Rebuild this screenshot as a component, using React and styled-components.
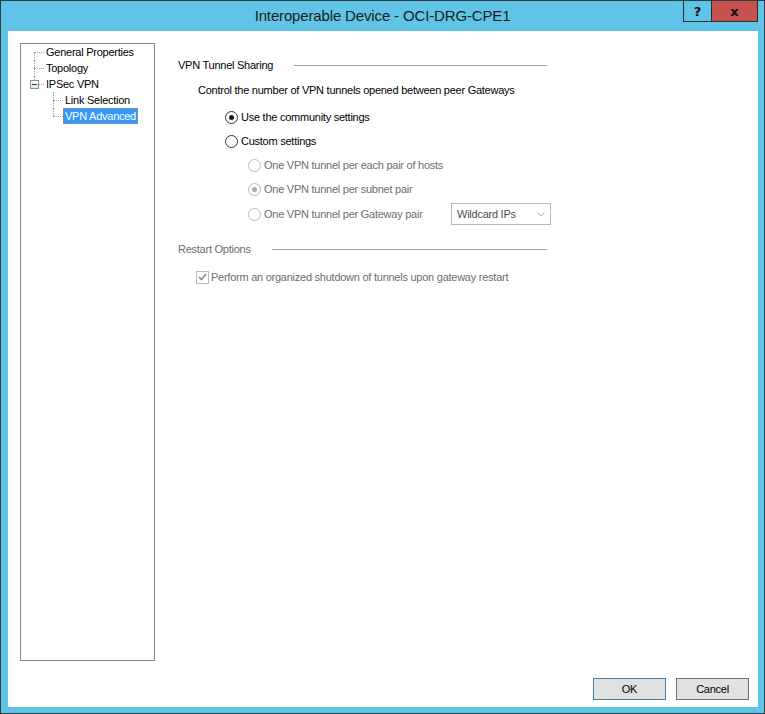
import React from 'react';
import styled, { createGlobalStyle, css } from 'styled-components';

const GlobalStyle = createGlobalStyle`
  html, body {
    margin: 0;
    padding: 0;
    background: #fff;
  }
  body {
    font-family: "Liberation Sans", Arial, sans-serif;
    font-size: 11px;
    letter-spacing: -0.25px;
    color: #000;
  }
`;

const Window = styled.div`
  width: 765px;
  height: 714px;
  box-sizing: border-box;
  border: 1px solid #2f3b42;
  background: #5fc4e7;
  display: flex;
  flex-direction: column;
`;

const TitleBar = styled.div`
  height: 30px;
  flex: none;
  display: grid;
  grid-template-columns: 1fr auto 1fr;
  align-items: start;
  padding: 0 6px;
`;

const Title = styled.div`
  grid-column: 2;
  font-size: 15px;
  line-height: 30px;
  letter-spacing: -0.15px;
  color: #1b1b1b;
  white-space: nowrap;
`;

const CaptionButtons = styled.div`
  grid-column: 3;
  justify-self: end;
  display: flex;
`;

const CaptionButton = styled.div`
  width: ${p => (p.$close ? 47 : 29)}px;
  height: 21px;
  box-sizing: border-box;
  border: 1px solid #2b2b2b;
  border-top: none;
  margin-left: ${p => (p.$close ? '-1px' : '0')};
  background: ${p => (p.$close ? '#c75050' : 'transparent')};
  display: flex;
  align-items: center;
  justify-content: center;
  font-family: "DejaVu Sans", sans-serif;
  font-weight: bold;
  font-size: 13px;
  letter-spacing: 0;
  color: #111;
`;

const Client = styled.div`
  flex: 1;
  min-height: 0;
  margin: 0 6px 6px 7px;
  background: #fff;
  display: flex;
  flex-direction: column;
  padding: 12px 9px 7px 12px;
`;

const Main = styled.div`
  flex: 1;
  min-height: 0;
  display: flex;
`;

const TreePanel = styled.div`
  width: 135px;
  flex: none;
  box-sizing: border-box;
  border: 1px solid #828790;
  padding-left: 3px;
`;

const TreeRow = styled.div`
  display: flex;
  height: 16px;
`;

const Guide = styled.span`
  position: relative;
  flex: none;
  width: ${p => p.$w}px;

  &::before {
    content: '';
    position: absolute;
    left: ${p => p.$at}px;
    border-left: 1px dotted #a0a0a0;
    display: ${p => (p.$v === 'none' ? 'none' : 'block')};
    ${p => p.$v === 'full' && css`top: 0; bottom: 0;`}
    ${p => p.$v === 'top' && css`top: 0; height: 8px;`}
    ${p => p.$v === 'bottom' && css`top: 8px; bottom: 0;`}
  }

  &::after {
    content: '';
    position: absolute;
    top: 8px;
    left: ${p => p.$at}px;
    right: 0;
    border-top: 1px dotted #a0a0a0;
    display: ${p => (p.$h ? 'block' : 'none')};
  }
`;

const Expander = styled.span`
  position: absolute;
  z-index: 1;
  left: 6px;
  top: 4px;
  width: 9px;
  height: 9px;
  box-sizing: border-box;
  border: 1px solid #919191;
  background: linear-gradient(#ffffff, #e2e2e2);
  display: flex;
  align-items: center;
  justify-content: center;

  &::after {
    content: '';
    width: 5px;
    height: 1px;
    background: #333;
  }
`;

const TreeLabel = styled.span`
  box-sizing: border-box;
  height: 16px;
  line-height: 14px;
  padding: 0 1px;
  border: 1px solid transparent;
  white-space: nowrap;
  ${p =>
    p.$selected &&
    css`
      background: #3399ff;
      color: #fff;
      border: 1px dotted #c9823c;
    `}
`;

const Content = styled.div`
  margin-left: 23px;
  padding-top: 14px;
  width: 369px;
  display: flex;
  flex-direction: column;
`;

const SectionHeading = styled.div`
  display: flex;
  align-items: center;
  height: 16px;
  margin-top: ${p => p.$top || 0}px;
  color: ${p => (p.$disabled ? '#6d6d6d' : '#000')};
  white-space: nowrap;
`;

const Rule = styled.span`
  flex: 1;
  height: 1px;
  margin-left: 21px;
  background: #a0a0a0;
`;

const Description = styled.div`
  margin-top: 9px;
  padding-left: 20px;
  line-height: 16px;
`;

const Options = styled.div`
  margin-top: 7px;
  display: flex;
  flex-direction: column;
`;

const OptionRow = styled.div`
  display: flex;
  align-items: center;
  height: ${p => p.$h || 24}px;
  padding-left: ${p => p.$indent}px;
  margin-top: ${p => p.$top || 0}px;
  color: ${p => (p.$disabled ? '#6d6d6d' : '#000')};
  white-space: nowrap;
`;

const RadioCircle = styled.span`
  flex: none;
  width: 13px;
  height: 13px;
  box-sizing: border-box;
  border-radius: 50%;
  border: 1px solid ${p => (p.$disabled ? '#bcbcbc' : '#333')};
  background: #fff;
  margin-right: 3px;
  display: flex;
  align-items: center;
  justify-content: center;

  &::after {
    content: '';
    width: 5px;
    height: 5px;
    border-radius: 50%;
    background: ${p => (p.$disabled ? '#a8a8a8' : '#1a1a1a')};
    display: ${p => (p.$checked ? 'block' : 'none')};
  }
`;

const OptionLabel = styled.span`
  width: ${p => (p.$width ? `${p.$width}px` : 'auto')};
  flex: none;
`;

const SelectBox = styled.div`
  flex: none;
  width: 100px;
  height: 22px;
  box-sizing: border-box;
  border: 1px solid #b9b9b9;
  background: #fff;
  display: flex;
  align-items: center;
  justify-content: space-between;
  padding: 0 5px 0 5px;
  color: #4d4d4d;
`;

const CheckBox = styled.span`
  flex: none;
  width: 13px;
  height: 13px;
  box-sizing: border-box;
  border: 1px solid #bcbcbc;
  background: #fff;
  margin-right: 2px;
  display: flex;
  align-items: center;
  justify-content: center;
`;

const Footer = styled.div`
  flex: none;
  margin-top: 17px;
  display: flex;
  justify-content: flex-end;
  gap: 10px;
`;

const DialogButton = styled.button`
  width: 73px;
  height: 22px;
  box-sizing: border-box;
  border: 1px solid ${p => (p.$default ? '#3c7fb1' : '#707070')};
  background: #e1e1e1;
  font-family: "Liberation Sans", Arial, sans-serif;
  font-size: 11px;
  letter-spacing: -0.25px;
  color: #000;
  padding: 0;
`;

const treeItems = [
  { label: 'General Properties', guides: [{ w: 20, at: 10, v: 'bottom', h: true }] },
  { label: 'Topology', guides: [{ w: 20, at: 10, v: 'full', h: true }] },
  { label: 'IPSec VPN', guides: [{ w: 20, at: 10, v: 'top', h: true, expander: true }] },
  {
    label: 'Link Selection',
    guides: [
      { w: 20, at: 10, v: 'none' },
      { w: 19, at: 9, v: 'full', h: true },
    ],
  },
  {
    label: 'VPN Advanced',
    selected: true,
    guides: [
      { w: 20, at: 10, v: 'none' },
      { w: 19, at: 9, v: 'top', h: true },
    ],
  },
];

function Chevron() {
  return (
    <svg width="8" height="5" viewBox="0 0 8 5">
      <path d="M0.5 0.5 L4 4 L7.5 0.5" fill="none" stroke="#b0b0b0" strokeWidth="1" />
    </svg>
  );
}

function Check() {
  return (
    <svg width="9" height="8" viewBox="0 0 9 8">
      <path d="M1 4 L3.5 6.5 L8 1" fill="none" stroke="#8a8a8a" strokeWidth="1.6" />
    </svg>
  );
}

export default function App() {
  return (
    <>
      <GlobalStyle />
      <Window>
        <TitleBar>
          <Title>Interoperable Device - OCI-DRG-CPE1</Title>
          <CaptionButtons>
            <CaptionButton>?</CaptionButton>
            <CaptionButton $close>x</CaptionButton>
          </CaptionButtons>
        </TitleBar>
        <Client>
          <Main>
            <TreePanel>
              {treeItems.map(item => (
                <TreeRow key={item.label}>
                  {item.guides.map((g, i) => (
                    <Guide key={i} $w={g.w} $at={g.at} $v={g.v} $h={g.h}>
                      {g.expander && <Expander />}
                    </Guide>
                  ))}
                  <TreeLabel $selected={item.selected}>{item.label}</TreeLabel>
                </TreeRow>
              ))}
            </TreePanel>
            <Content>
              <SectionHeading>
                VPN Tunnel Sharing
                <Rule />
              </SectionHeading>
              <Description>Control the number of VPN tunnels opened between peer Gateways</Description>
              <Options>
                <OptionRow $indent={47}>
                  <RadioCircle $checked />
                  <OptionLabel>Use the community settings</OptionLabel>
                </OptionRow>
                <OptionRow $indent={47}>
                  <RadioCircle />
                  <OptionLabel>Custom settings</OptionLabel>
                </OptionRow>
                <OptionRow $indent={70} $disabled>
                  <RadioCircle $disabled />
                  <OptionLabel>One VPN tunnel per each pair of hosts</OptionLabel>
                </OptionRow>
                <OptionRow $indent={70} $disabled>
                  <RadioCircle $disabled $checked />
                  <OptionLabel>One VPN tunnel per subnet pair</OptionLabel>
                </OptionRow>
                <OptionRow $indent={70} $h={26} $disabled>
                  <RadioCircle $disabled />
                  <OptionLabel $width={187}>One VPN tunnel per Gateway pair</OptionLabel>
                  <SelectBox>
                    Wildcard IPs
                    <Chevron />
                  </SelectBox>
                </OptionRow>
              </Options>
              <SectionHeading $top={14} $disabled>
                Restart Options
                <Rule />
              </SectionHeading>
              <OptionRow $indent={18} $top={8} $disabled>
                <CheckBox>
                  <Check />
                </CheckBox>
                <OptionLabel>Perform an organized shutdown of tunnels upon gateway restart</OptionLabel>
              </OptionRow>
            </Content>
          </Main>
          <Footer>
            <DialogButton $default>OK</DialogButton>
            <DialogButton>Cancel</DialogButton>
          </Footer>
        </Client>
      </Window>
    </>
  );
}
